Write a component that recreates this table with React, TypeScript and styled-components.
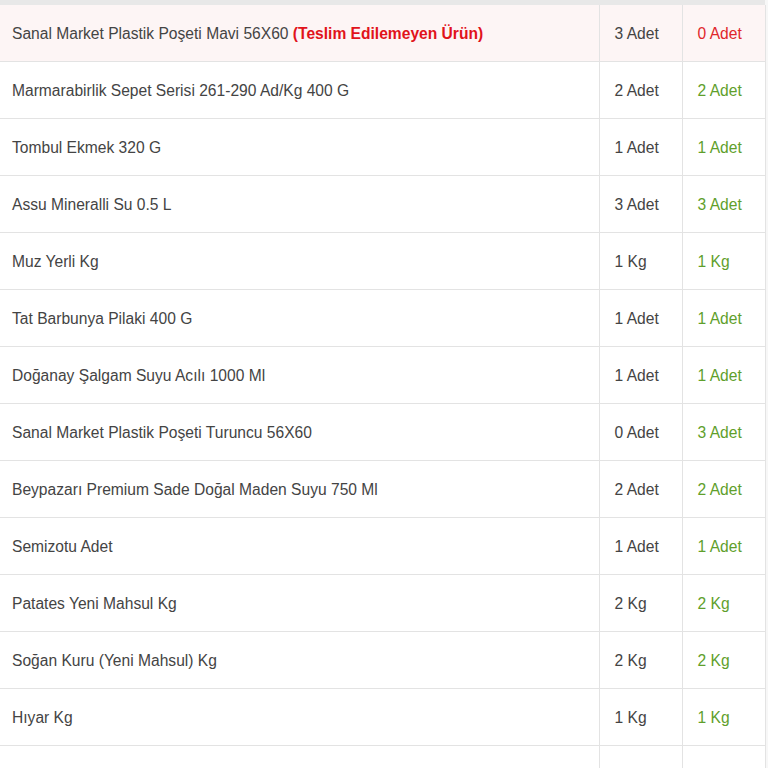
import React from 'react';
import styled, { createGlobalStyle } from 'styled-components';

const GlobalStyle = createGlobalStyle`
  html, body {
    margin: 0;
    padding: 0;
    background: #f7f7f7;
    font-family: "Liberation Sans", Arial, sans-serif;
  }
`;

const Wrapper = styled.div`
  width: 765px;
  background: #fff;
  border-top: 5px solid #e8e8e8;
`;

const Table = styled.table`
  width: 100%;
  border-collapse: collapse;
  table-layout: fixed;
  font-size: 15.6px;
  color: #444;
`;

const Row = styled.tr<{ $warn?: boolean }>`
  background: ${(p) => (p.$warn ? '#fdf5f5' : '#fff')};
  border-bottom: 1px solid #e3e3e3;
`;

const NameCell = styled.td`
  height: 54px;
  padding: 2px 12px 0;
  vertical-align: middle;
  white-space: nowrap;
`;

const QtyCell = styled.td<{ $state?: 'ok' | 'missing' }>`
  height: 54px;
  padding: 2px 15px 0;
  border-left: 1px solid #e3e3e3;
  border-right: 1px solid #e3e3e3;
  vertical-align: middle;
  white-space: nowrap;
  color: ${(p) =>
    p.$state === 'ok' ? '#5f9f2c' : p.$state === 'missing' ? '#e0262a' : '#444'};
`;

const Warning = styled.span`
  color: #e1131b;
  font-weight: bold;
`;

type Item = {
  name: string;
  ordered: string;
  delivered: string;
  missing?: boolean;
};

const items: Item[] = [
  { name: 'Sanal Market Plastik Poşeti Mavi 56X60', ordered: '3 Adet', delivered: '0 Adet', missing: true },
  { name: 'Marmarabirlik Sepet Serisi 261-290 Ad/Kg 400 G', ordered: '2 Adet', delivered: '2 Adet' },
  { name: 'Tombul Ekmek 320 G', ordered: '1 Adet', delivered: '1 Adet' },
  { name: 'Assu Mineralli Su 0.5 L', ordered: '3 Adet', delivered: '3 Adet' },
  { name: 'Muz Yerli Kg', ordered: '1 Kg', delivered: '1 Kg' },
  { name: 'Tat Barbunya Pilaki 400 G', ordered: '1 Adet', delivered: '1 Adet' },
  { name: 'Doğanay Şalgam Suyu Acılı 1000 Ml', ordered: '1 Adet', delivered: '1 Adet' },
  { name: 'Sanal Market Plastik Poşeti Turuncu 56X60', ordered: '0 Adet', delivered: '3 Adet' },
  { name: 'Beypazarı Premium Sade Doğal Maden Suyu 750 Ml', ordered: '2 Adet', delivered: '2 Adet' },
  { name: 'Semizotu Adet', ordered: '1 Adet', delivered: '1 Adet' },
  { name: 'Patates Yeni Mahsul Kg', ordered: '2 Kg', delivered: '2 Kg' },
  { name: 'Soğan Kuru (Yeni Mahsul) Kg', ordered: '2 Kg', delivered: '2 Kg' },
  { name: 'Hıyar Kg', ordered: '1 Kg', delivered: '1 Kg' },
  { name: 'Abant Doğal Kaynak Suyu Cam Şişe', ordered: '6 Adet', delivered: '6 Adet' },
];

export default function App() {
  return (
    <>
      <GlobalStyle />
      <Wrapper>
        <Table>
          <colgroup>
            <col style={{ width: 599 }} />
            <col style={{ width: 83 }} />
            <col style={{ width: 83 }} />
          </colgroup>
          <tbody>
            {items.map((it) => (
              <Row key={it.name} $warn={it.missing}>
                <NameCell>
                  {it.name}
                  {it.missing && <Warning> (Teslim Edilemeyen Ürün)</Warning>}
                </NameCell>
                <QtyCell>{it.ordered}</QtyCell>
                <QtyCell $state={it.missing ? 'missing' : 'ok'}>{it.delivered}</QtyCell>
              </Row>
            ))}
          </tbody>
        </Table>
      </Wrapper>
    </>
  );
}
